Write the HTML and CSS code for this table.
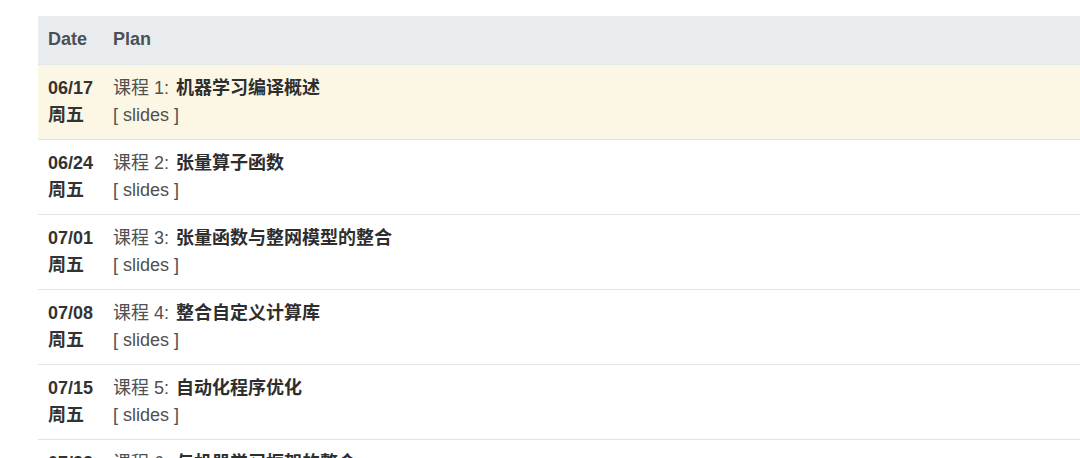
FILE: index.html
```html
<!DOCTYPE html>
<html lang="zh">
<head>
<meta charset="utf-8">
<link rel="stylesheet" href="styles.css">
</head>
<body>
<div class="wrap">
<table class="plan">
  <thead>
    <tr><th class="c-date">Date</th><th>Plan</th></tr>
  </thead>
  <tbody>
    <tr class="hl">
      <td class="c-date">06/17<br>周五</td>
      <td>课程 1: <b>机器学习编译概述</b><br>[ slides ]</td>
    </tr>
    <tr>
      <td class="c-date">06/24<br>周五</td>
      <td>课程 2: <b>张量算子函数</b><br>[ slides ]</td>
    </tr>
    <tr>
      <td class="c-date">07/01<br>周五</td>
      <td>课程 3: <b>张量函数与整网模型的整合</b><br>[ slides ]</td>
    </tr>
    <tr>
      <td class="c-date">07/08<br>周五</td>
      <td>课程 4: <b>整合自定义计算库</b><br>[ slides ]</td>
    </tr>
    <tr>
      <td class="c-date">07/15<br>周五</td>
      <td>课程 5: <b>自动化程序优化</b><br>[ slides ]</td>
    </tr>
    <tr>
      <td class="c-date">07/22<br>周五</td>
      <td>课程 6: <b>与机器学习框架的整合</b><br>[ slides ]</td>
    </tr>
  </tbody>
</table>
</div>
</body>
</html>
```
FILE: styles.css
```css
html, body {
  margin: 0;
  padding: 0;
  background: #fff;
  overflow: hidden;
}
body {
  font-family: "Liberation Sans", "Noto Sans CJK SC", sans-serif;
  font-size: 18px;
  color: #505050;
}
.wrap {
  padding: 16px 0 0 38px;
}
.plan {
  border-collapse: collapse;
  width: 1042px;
}
.plan th, .plan td {
  padding: 10px 10px;
  line-height: 27px;
  text-align: left;
  vertical-align: top;
}
.plan th {
  background: #e9ecef;
  color: #495057;
  font-weight: bold;
  padding: 10px 10px 11px;
  border-bottom: 1px solid #e3e6e9;
}
.plan td {
  border-bottom: 1px solid #e2e4e6;
}
.plan .c-date {
  width: 45px;
}
.plan td.c-date {
  font-weight: bold;
  color: #333;
}
.plan td b {
  font-weight: bold;
  color: #2e2e2e;
  margin-left: 2px;
}
.plan tr.hl td {
  background: #fcf7e4;
}
```
